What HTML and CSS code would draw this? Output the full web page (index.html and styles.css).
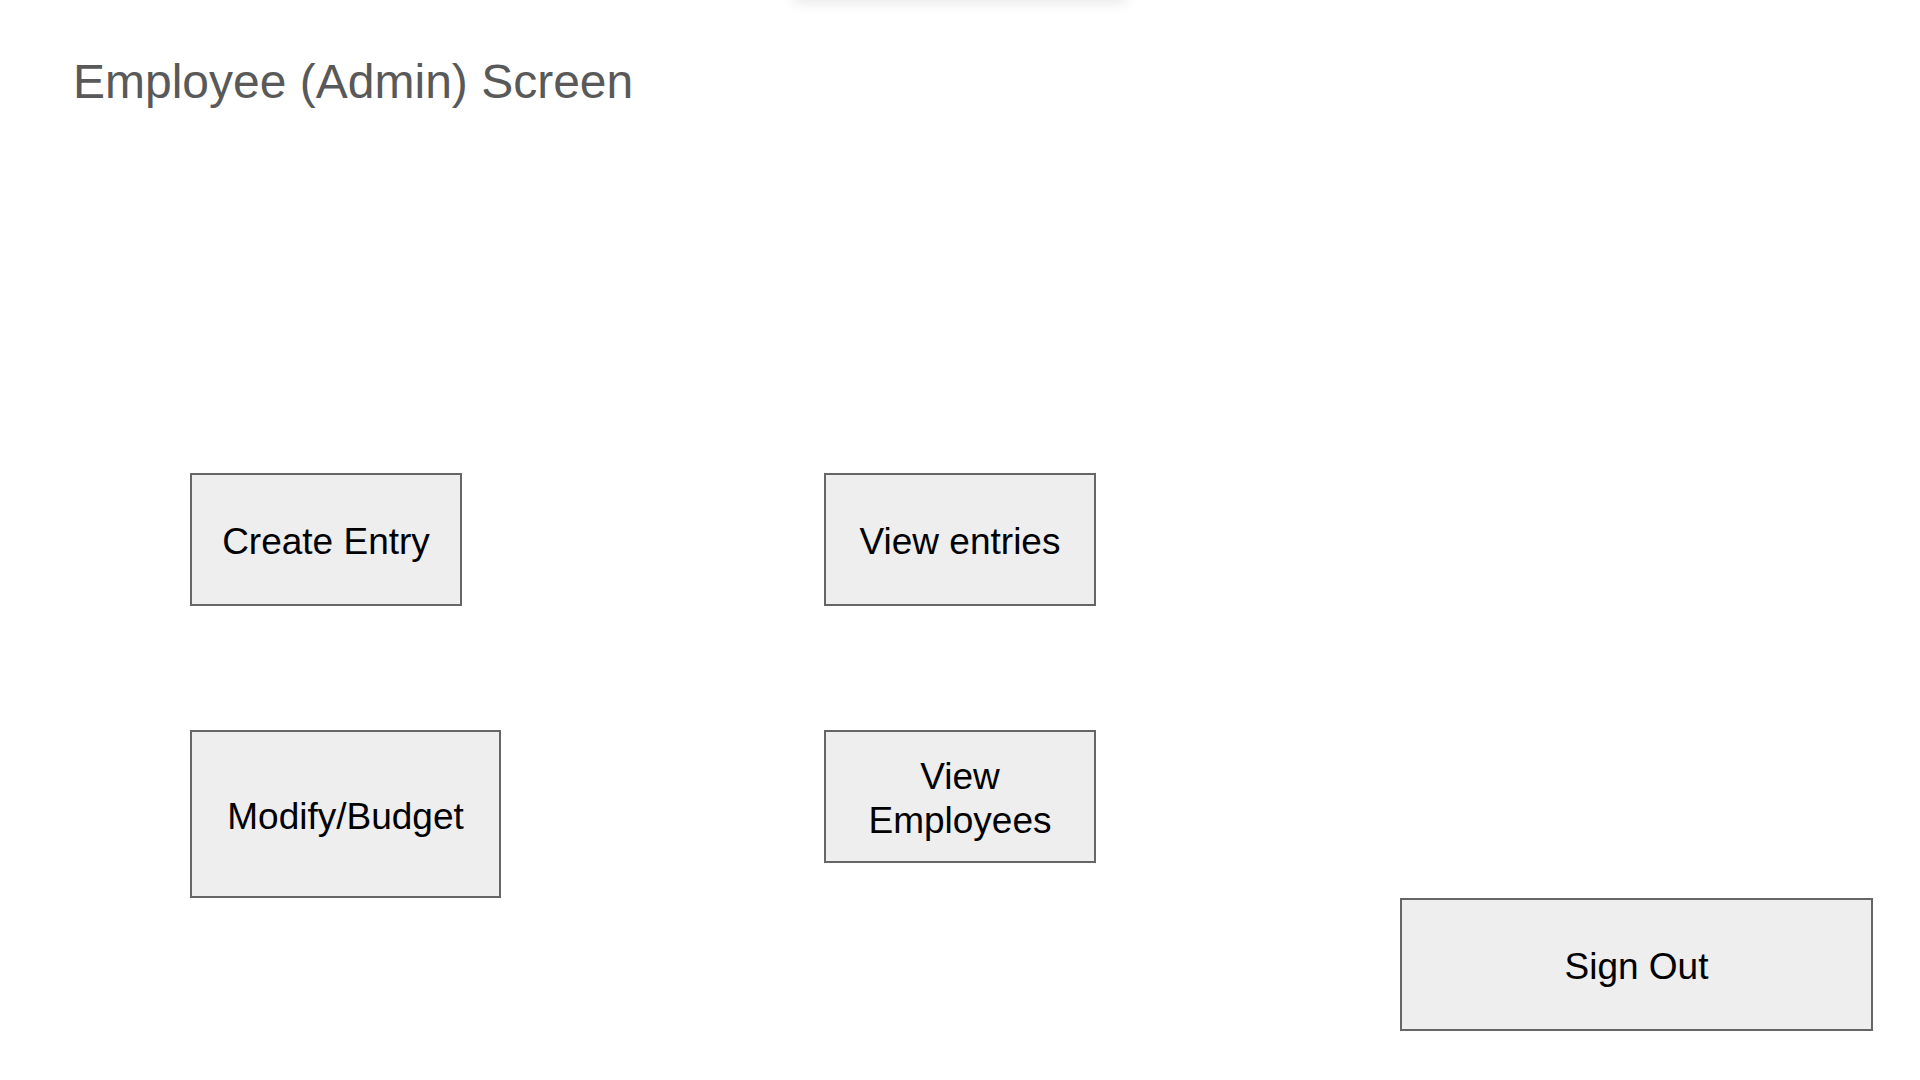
FILE: index.html
```html
<!DOCTYPE html>
<html lang="en">
<head>
<meta charset="utf-8">
<title>Employee (Admin) Screen</title>
<link rel="stylesheet" href="styles.css">
</head>
<body>
<div class="page">
  <div class="top-shadow"></div>
  <header class="header">
    <h1 class="title">Employee (Admin) Screen</h1>
  </header>
  <main class="actions">
    <div class="btn btn-create">Create Entry</div>
    <div class="btn btn-view">View entries</div>
    <div class="btn btn-modify">Modify/Budget</div>
    <div class="btn btn-employees">View<br>Employees</div>
    <div class="btn btn-signout">Sign Out</div>
  </main>
</div>
</body>
</html>
```

FILE: styles.css
```css
html, body {
  margin: 0;
  padding: 0;
  background: #ffffff;
}

.page {
  position: relative;
  width: 1920px;
  height: 1080px;
  overflow: hidden;
  font-family: "Liberation Sans", Arial, sans-serif;
}

.top-shadow {
  position: absolute;
  top: -20px;
  left: 795px;
  width: 330px;
  height: 20px;
  background: #ffffff;
  box-shadow: 0 0 14px 2px rgba(0, 0, 0, 0.10);
}

.header {
  padding: 55px 0 0 73px;
}

.title {
  margin: 0;
  font-size: 48px;
  line-height: 54px;
  font-weight: 400;
  color: #595959;
}

.actions {
  margin-top: 364px;
  padding-left: 190px;
  display: grid;
  grid-template-columns: 311px 323px 273px 303px 473px;
  grid-template-rows: 133px 124px 168px 133px;
}

.btn {
  box-sizing: border-box;
  display: flex;
  align-items: center;
  justify-content: center;
  text-align: center;
  padding-top: 5px;
  background: #eeeeee;
  border: 2px solid #666666;
  color: #000000;
  font-size: 37px;
  line-height: 44px;
}

.btn-create {
  grid-column: 1;
  grid-row: 1;
  width: 272px;
  height: 133px;
}

.btn-view {
  grid-column: 3;
  grid-row: 1;
  width: 272px;
  height: 133px;
}

.btn-modify {
  grid-column: 1;
  grid-row: 3;
  width: 311px;
  height: 168px;
}

.btn-employees {
  grid-column: 3;
  grid-row: 3;
  width: 272px;
  height: 133px;
}

.btn-signout {
  grid-column: 5;
  grid-row: 4;
  width: 473px;
  height: 133px;
}
```
